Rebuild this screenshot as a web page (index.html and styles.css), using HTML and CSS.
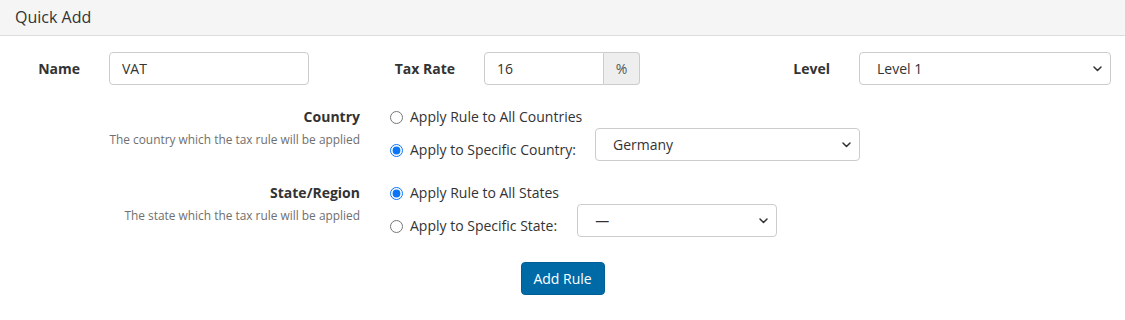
FILE: index.html
```html
<!DOCTYPE html>
<html>
<head>
<meta charset="utf-8">
<link rel="stylesheet" href="styles.css">
</head>
<body>
<div class="panel">
  <div class="panel-heading">Quick Add</div>
  <div class="panel-body">
    <div class="row-top">
      <div class="field">
        <label class="lbl">Name</label>
        <div class="ctl"><input class="text name-input" type="text" value="VAT"></div>
      </div>
      <div class="field">
        <label class="lbl">Tax Rate</label>
        <div class="ctl">
          <div class="input-group">
            <input class="text rate-input" type="text" value="16">
            <span class="addon">%</span>
          </div>
        </div>
      </div>
      <div class="field">
        <label class="lbl">Level</label>
        <div class="ctl">
          <div class="select-wrap level-select">
            <select class="select"><option>Level 1</option></select>
            <svg class="chev" viewBox="0 0 9 6" width="9" height="6"><path d="M1 1 L4.5 4.5 L8 1" fill="none" stroke="#333" stroke-width="1.5" stroke-linecap="round" stroke-linejoin="round"/></svg>
          </div>
        </div>
      </div>
    </div>

    <div class="group">
      <div class="group-label">
        <div class="glabel">Country</div>
        <div class="help">The country which the tax rule will be applied</div>
      </div>
      <div class="options">
        <label class="opt"><input type="radio" name="country"><span>Apply Rule to All Countries</span></label>
        <div class="opt-row">
          <label class="opt"><input type="radio" name="country" checked><span>Apply to Specific Country:</span></label>
          <div class="select-wrap country-select">
            <select class="select"><option>Germany</option></select>
            <svg class="chev" viewBox="0 0 9 6" width="9" height="6"><path d="M1 1 L4.5 4.5 L8 1" fill="none" stroke="#333" stroke-width="1.5" stroke-linecap="round" stroke-linejoin="round"/></svg>
          </div>
        </div>
      </div>
    </div>

    <div class="group">
      <div class="group-label">
        <div class="glabel">State/Region</div>
        <div class="help">The state which the tax rule will be applied</div>
      </div>
      <div class="options">
        <label class="opt"><input type="radio" name="state" checked><span>Apply Rule to All States</span></label>
        <div class="opt-row">
          <label class="opt"><input type="radio" name="state"><span>Apply to Specific State:</span></label>
          <div class="select-wrap state-select">
            <select class="select"><option>—</option></select>
            <svg class="chev" viewBox="0 0 9 6" width="9" height="6"><path d="M1 1 L4.5 4.5 L8 1" fill="none" stroke="#333" stroke-width="1.5" stroke-linecap="round" stroke-linejoin="round"/></svg>
          </div>
        </div>
      </div>
    </div>

    <div class="actions">
      <button class="btn" type="button">Add Rule</button>
    </div>
  </div>
</div>
</body>
</html>
```

FILE: styles.css
```css
* { box-sizing: border-box; }
html, body { margin: 0; padding: 0; background: #fff; }
body {
  font-family: "Open Sans", "Liberation Sans", sans-serif;
  font-size: 14px;
  color: #333;
}
.panel { width: 1125px; }
.panel-heading {
  height: 36px;
  background: #f5f5f5;
  border-bottom: 1px solid #dcdcdc;
  padding: 6px 15px 0;
  font-size: 16px;
  line-height: 22px;
  color: #333;
}
.panel-body { padding-top: 16px; }

.row-top {
  display: grid;
  grid-template-columns: repeat(3, 375px);
}
.field {
  display: grid;
  grid-template-columns: 94px 1fr;
  align-items: center;
}
.lbl {
  text-align: right;
  padding-right: 14px;
  font-weight: 700;
  font-size: 14px;
}
.ctl { padding-left: 15px; padding-right: 15px; }

.text {
  height: 33px;
  border: 1px solid #ccc;
  border-radius: 4px;
  padding: 0 12px;
  font-family: inherit;
  font-size: 14px;
  color: #333;
  background: #fff;
  outline: none;
}
.name-input { width: 200px; }
.input-group { display: flex; width: 156px; }
.rate-input {
  width: 120px;
  border-top-right-radius: 0;
  border-bottom-right-radius: 0;
}
.addon {
  width: 36px;
  height: 33px;
  display: flex;
  align-items: center;
  justify-content: center;
  background: #eee;
  border: 1px solid #ccc;
  border-left: 0;
  border-radius: 0 4px 4px 0;
  font-size: 14px;
  color: #555;
}

.select-wrap { position: relative; height: 33px; }
.select {
  appearance: none;
  -webkit-appearance: none;
  width: 100%;
  height: 33px;
  border: 1px solid #ccc;
  border-radius: 4px;
  background: #fff;
  padding: 0 28px 0 17px;
  font-family: inherit;
  font-size: 14px;
  color: #333;
  outline: none;
}
.chev { position: absolute; right: 9px; top: 14px; pointer-events: none; }
.level-select { width: 252px; }
.country-select { width: 265px; margin-left: 19px; }
.state-select { width: 200px; margin-left: 20px; }

.group {
  display: grid;
  grid-template-columns: 375px 1fr;
  margin-top: 22px;
}
.group-label {
  text-align: right;
  padding-right: 15px;
}
.glabel {
  font-weight: 700;
  font-size: 14px;
  line-height: 20px;
}
.help {
  font-size: 11.9px;
  line-height: 16px;
  color: #707070;
  margin-top: 4px;
}
.options { padding-left: 15px; }
.opt {
  display: flex;
  align-items: center;
  gap: 7px;
  line-height: 20px;
  font-size: 14px;
  color: #333;
}
.opt input {
  margin: 0;
  width: 13px;
  height: 13px;
  accent-color: #0a76f6;
}
.options > .opt { margin-bottom: 1px; }
.opt-row {
  display: flex;
  align-items: flex-end;
}
.opt-row .opt { margin-bottom: 1px; }

.actions {
  display: flex;
  justify-content: center;
  margin-top: 25px;
}
.btn {
  width: 84px;
  height: 33px;
  background: #006aa7;
  border: 1px solid #005f96;
  border-radius: 4px;
  color: #fff;
  font-family: inherit;
  font-size: 14px;
  padding: 0;
}
```
